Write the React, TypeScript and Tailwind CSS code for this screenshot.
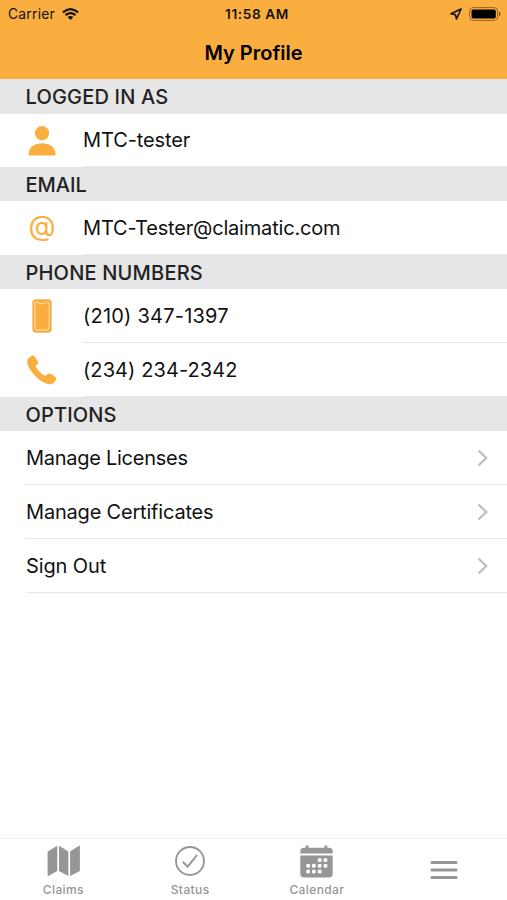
import React from "react";

function SectionHeader({ children, className }: { children: React.ReactNode; className: string }) {
  return (
    <h2 className={`flex items-center bg-[#e6e6e6] pl-[25.5px] text-[20px] font-[550] text-[#222] ${className}`}>
      {children}
    </h2>
  );
}

function InfoRow({ icon, text, className, textClass }: { icon: React.ReactNode; text: string; className: string; textClass: string }) {
  return (
    <div className={`flex ${className}`}>
      <div className="flex w-[83px] items-center justify-center text-[#fbae40]">{icon}</div>
      <div className="flex flex-1 items-center border-b border-[#e6e6e6] text-[20px]">
        <span className={`whitespace-nowrap ${textClass}`}>{text}</span>
      </div>
    </div>
  );
}

function OptionRow({ text, textClass }: { text: string; textClass: string }) {
  return (
    <button className="ml-[26px] flex h-[54px] items-center justify-between border-b border-[#e9e9e9] pr-[18px] text-[20px]">
      <span className={`whitespace-nowrap ${textClass}`}>{text}</span>
      <svg width="12" height="18" viewBox="0 0 12 18" fill="none" stroke="#bdbdbd" strokeWidth="2.300">
        <path d="M1.500 1.500 9.300 9 1.500 16.500" />
      </svg>
    </button>
  );
}

function PersonIcon() {
  return (
    <svg width="28" height="30" viewBox="0 0 28 30" fill="currentColor">
      <circle cx="14" cy="7.200" r="7.100" />
      <path d="M.5 28.200C.5 21.400 6.200 17.200 14 17.200s13.500 4.200 13.500 11q0 1.200-1.200 1.200H1.700Q.5 29.400.5 28.200Z" />
    </svg>
  );
}

function MobileIcon() {
  return (
    <svg width="20" height="34" viewBox="0 0 20 34">
      <rect x=".3" y=".2" width="19.400" height="33.600" rx="4" fill="currentColor" />
      <path
        d="M4.400 3h1.100q.4 1.600 1.800 1.600h5.400q1.400 0 1.800-1.600h1.100q1.500 0 1.500 1.500v25q0 1.500-1.500 1.500H4.400q-1.500 0-1.500-1.500v-25Q2.900 3 4.400 3Z"
        fill="none"
        stroke="#ffe4bd"
        strokeWidth=".9"
      />
    </svg>
  );
}

function PhoneIcon() {
  return (
    <svg width="30" height="30" viewBox="0 0 30 30" fill="currentColor">
      <path d="M1.200 3.400Q4.400.3 6 .4C7.400.5 10 4.500 10.900 6.500C11.400 8 10.800 9.200 9.600 10.100C8.600 10.900 8.600 11.600 9.200 12.600C11 15.600 13.900 18.500 17 20.300C18.100 20.900 18.900 20.800 19.600 19.900C20.500 18.700 21.700 18.200 23.200 18.700C25.300 19.500 28.800 22 29.300 23.300C29.700 24.700 27 28 25.200 28.900C20.400 30.700 13.500 26.500 8.800 21.600C3.800 16.400-.9 9.400.4 4.900Q.6 4 1.200 3.400Z" />
    </svg>
  );
}

function WifiIcon() {
  return (
    <svg width="17" height="12" viewBox="0 0 17 12" fill="none" stroke="#111" strokeWidth="2.200">
      <path d="M.9 4.400Q8.500-2 16.100 4.400" />
      <path d="M3.500 7.200Q8.500 3.200 13.500 7.200" />
      <path d="M8.500 12 5.600 9.100Q8.500 6.900 11.400 9.100Z" fill="#111" stroke="none" />
    </svg>
  );
}

function MapIcon() {
  return (
    <svg width="34" height="32" viewBox="0 0 34 32" fill="#969696">
      <path d="M.6 6.600 10.300.8V26L1.300 31Q.6 31.300.6 30.500Z" />
      <path d="M12 .8 21.400 6.600V31L12 26Z" />
      <path d="M23.100 6.600 32 .8Q32.900.4 32.900 1.300V26L23.100 31Z" />
    </svg>
  );
}

function StatusIcon() {
  return (
    <svg width="32" height="32" viewBox="0 0 32 32" fill="none" stroke="#969696">
      <circle cx="16" cy="16" r="14" strokeWidth="1.900" />
      <path d="m8.800 16.700 4.900 5L23 10" strokeWidth="2" />
    </svg>
  );
}

const calendarDots: [number, number][] = [
  [19.500, 15], [25.300, 15],
  [8, 20.700], [13.700, 20.700], [19.500, 20.700], [25.300, 20.700],
  [8, 26.400], [13.700, 26.400], [19.500, 26.400],
];

function CalendarIcon() {
  return (
    <svg width="33" height="33" viewBox="0 0 33 33" fill="#969696">
      <path d="M.3 8.500V6.500Q.3 2.800 4 2.800H5.600V1.400Q5.600.3 7.100.3T8.600 1.400V2.800H24.400V1.400Q24.400.3 25.900.3T27.400 1.400V2.800H29Q32.700 2.800 32.700 6.500V8.500Z" />
      <path d="M.3 10.600H32.700V28.600Q32.700 32.600 28.700 32.600H4.300Q.3 32.600.3 28.600Z" />
      {calendarDots.map(([x, y]) => (
        <rect key={`${x}-${y}`} x={x - 1.700} y={y - 1.700} width="3.700" height="3.700" rx="1.100" fill="#fff" />
      ))}
    </svg>
  );
}

function Tab({ icon, label }: { icon: React.ReactNode; label: string }) {
  return (
    <button className="flex flex-col items-center pt-[5px] text-[12px] leading-[15px] font-[450] tracking-[0.4px] text-[#969696]">
      <span className="flex h-[34px] items-center">{icon}</span>
      <span className="mt-1">{label}</span>
    </button>
  );
}

export default function App() {
  return (
    <div className="flex h-[900px] w-[507px] flex-col overflow-hidden bg-white font-['Inter','Liberation_Sans',sans-serif] text-[#111]">
      <header className="h-[79px] shrink-0 bg-[#fbae40]">
        <div className="grid h-7 grid-cols-3 items-center pl-[8px] pr-[6px]">
          <div className="flex items-center gap-[7px] text-[13.800px] tracking-[0.250px]">
            Carrier <WifiIcon />
          </div>
          <div className="pt-px pl-[5px] text-center text-[13.600px] font-semibold tracking-[0.600px] whitespace-nowrap">11:58 AM</div>
          <div className="flex items-center justify-end gap-[7px]">
            <svg width="12" height="12" viewBox="0 0 12 12" fill="none" stroke="#111" strokeWidth="1.600" strokeLinejoin="round">
              <path d="M11 1 1 5.800 5.400 6.600 6.500 11Z" />
            </svg>
            <svg width="32" height="14" viewBox="0 0 32 14">
              <rect x=".6" y=".6" width="28" height="12.800" rx="3.500" fill="none" stroke="#94661f" strokeWidth="1" />
              <rect x="2.500" y="2.500" width="24.300" height="9" rx="1.700" fill="#000" />
              <path d="M30 4.800q1.600.6 1.600 2.200T30 9.200Z" fill="#76511b" />
            </svg>
          </div>
        </div>
        <h1 className="h-12 text-center text-[20px] leading-[50px] font-semibold text-black">My Profile</h1>
      </header>
      <main className="flex flex-1 flex-col">
        <SectionHeader className="h-[35px] pt-[1.500px] tracking-[0.180px]">LOGGED IN AS</SectionHeader>
        <InfoRow className="h-[53px]" icon={<PersonIcon />} text="MTC-tester" textClass="tracking-[-0.100px]" />
        <SectionHeader className="h-[34px] pt-[1.500px]">EMAIL</SectionHeader>
        <InfoRow
          className="h-[54px]"
          icon={<span className="pb-[4px] pl-px text-[28px] leading-none">@</span>}
          text="MTC-Tester@claimatic.com"
          textClass="pt-px tracking-[-0.180px]"
        />
        <SectionHeader className="h-[34px] pt-[1.500px] tracking-[0.200px]">PHONE NUMBERS</SectionHeader>
        <InfoRow className="h-[54px]" icon={<MobileIcon />} text="(210) 347-1397" textClass="pt-px tracking-[0.220px]" />
        <InfoRow className="h-[54px]" icon={<PhoneIcon />} text="(234) 234-2342" textClass="pt-px tracking-[0.080px]" />
        <SectionHeader className="h-[34px] pt-[1.500px] tracking-[0.150px]">OPTIONS</SectionHeader>
        <OptionRow text="Manage Licenses" textClass="pt-px tracking-[-0.270px]" />
        <OptionRow text="Manage Certificates" textClass="pt-px tracking-[-0.190px]" />
        <OptionRow text="Sign Out" textClass="tracking-[-0.120px]" />
      </main>
      <nav className="grid h-[62px] shrink-0 grid-cols-4 border-t border-[#eee]">
        <Tab icon={<span className="pl-[2px]"><MapIcon /></span>} label="Claims" />
        <Tab icon={<StatusIcon />} label="Status" />
        <Tab icon={<CalendarIcon />} label="Calendar" />
        <button className="flex items-center justify-center" aria-label="Menu">
          <svg width="28" height="20" viewBox="0 0 28 20" stroke="#969696" strokeWidth="3.200" strokeLinecap="round">
            <path d="M2 2.500H26M2 10H26M2 17.500H26" />
          </svg>
        </button>
      </nav>
    </div>
  );
}
